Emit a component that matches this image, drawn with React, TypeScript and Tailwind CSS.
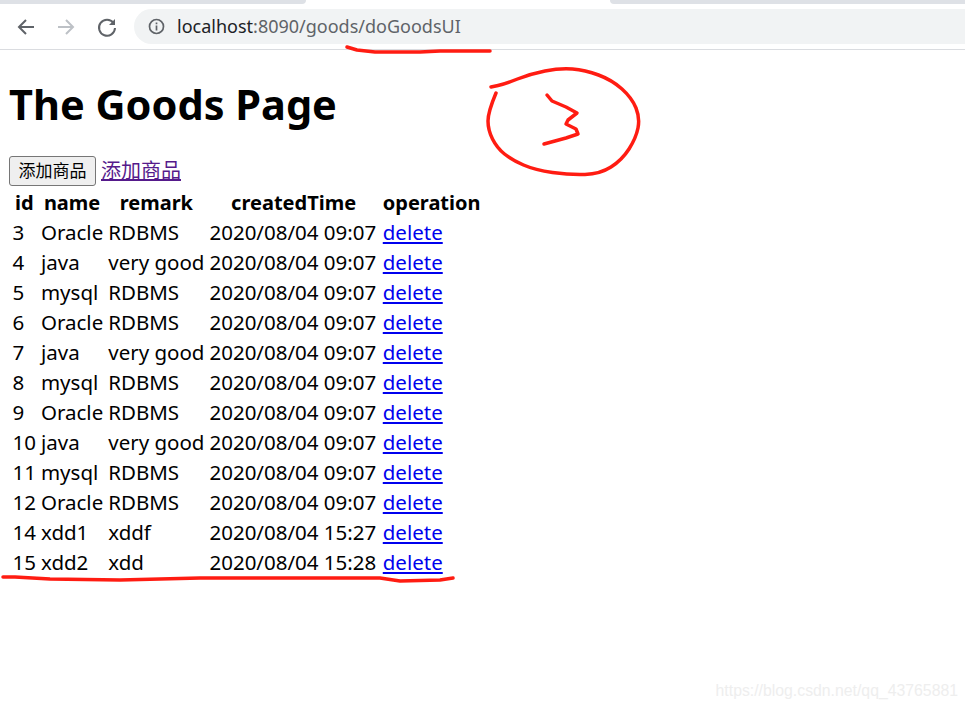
const FONT = "font-['Noto_Sans','Noto_Sans_CJK_SC',sans-serif]";

const ROWS = [
  ["3", "Oracle", "RDBMS", "2020/08/04 09:07"],
  ["4", "java", "very good", "2020/08/04 09:07"],
  ["5", "mysql", "RDBMS", "2020/08/04 09:07"],
  ["6", "Oracle", "RDBMS", "2020/08/04 09:07"],
  ["7", "java", "very good", "2020/08/04 09:07"],
  ["8", "mysql", "RDBMS", "2020/08/04 09:07"],
  ["9", "Oracle", "RDBMS", "2020/08/04 09:07"],
  ["10", "java", "very good", "2020/08/04 09:07"],
  ["11", "mysql", "RDBMS", "2020/08/04 09:07"],
  ["12", "Oracle", "RDBMS", "2020/08/04 09:07"],
  ["14", "xdd1", "xddf", "2020/08/04 15:27"],
  ["15", "xdd2", "xdd", "2020/08/04 15:28"],
];

const HEADERS = ["id", "name", "remark", "createdTime", "operation"];

// browser toolbar above the page
const Toolbar = () => (
  <div className="h-[50px] bg-white border-b border-[#dadce0]">
    <div className="flex h-[4px]">
      <div className="w-[306px] bg-[#dee1e6] rounded-br-lg" />
      <div className="w-[304px]" />
      <div className="flex-1 bg-[#dee1e6] rounded-bl-lg" />
    </div>
    <div className="flex items-center h-[45px] pl-[15px]">
      <svg width="22" height="22" viewBox="0 0 22 22" fill="none" stroke="#5f6368" strokeWidth="2">
        <path d="M19 11H4M11 4l-7 7 7 7" />
      </svg>
      <svg className="ml-[18px]" width="22" height="22" viewBox="0 0 22 22" fill="none" stroke="#bdc1c6" strokeWidth="2">
        <path d="M3 11h15M11 4l7 7-7 7" />
      </svg>
      <svg className="ml-[19px]" width="22" height="22" viewBox="0 0 22 22" fill="none" stroke="#5f6368" strokeWidth="2">
        <path d="M17.5 7A8 8 0 1 0 19 12" />
        <path d="M19 3v6h-6" fill="#5f6368" stroke="none" />
      </svg>
      <div className="flex items-center flex-1 h-[35px] ml-[16px] pl-[14px] bg-[#f1f3f4] rounded-l-[18px]">
        <svg width="17" height="17" viewBox="0 0 17 17" fill="none" stroke="#5f6368" strokeWidth="1.7">
          <circle cx="8.5" cy="8.5" r="7" />
          <path d="M8.5 7.5v5M8.5 4.5v1.7" />
        </svg>
        <span className={`ml-[12px] text-[18px] text-[#5f6368] ${FONT}`}>
          <span className="text-[#202124]">localhost</span>:8090/goods/doGoodsUI
        </span>
      </div>
    </div>
  </div>
);

// hand drawn line through the points, rounded with midpoints
const smooth = (pts: number[][]) => {
  let d = `M${pts[0][0]} ${pts[0][1]}`;
  for (let i = 1; i < pts.length - 1; i++) {
    const mx = (pts[i][0] + pts[i + 1][0]) / 2;
    const my = (pts[i][1] + pts[i + 1][1]) / 2;
    d += `Q${pts[i][0]} ${pts[i][1]} ${mx} ${my}`;
  }
  const last = pts[pts.length - 1];
  return d + `L${last[0]} ${last[1]}`;
};

// red pen marks drawn over the screenshot
const Scribbles = () => (
  <svg className="absolute inset-0 pointer-events-none" width="965" height="708" fill="none" stroke="#ff1c12" strokeWidth="3.5" strokeLinecap="round" strokeLinejoin="round">
    <path d="M347 47L357 50L375 52L420 52L440 51L490 51" />
    <path d={smooth([[496, 93], [488, 112], [488, 130], [497, 148], [512, 160], [535, 170], [570, 175], [600, 174], [622, 160], [636, 138], [640, 118], [632, 98], [612, 80], [585, 70], [560, 68], [530, 74], [505, 84], [491, 87]])} />
    <path d="M547 95L552 101L566 107L577 113L568 120L566 124L576 129L578 134L566 138L544 144" />
    <path d="M3 577L15 577L50 579L120 580L200 578L380 578L400 581L440 580L453 578" />
  </svg>
);

export default function App() {
  return (
    <div className={`relative w-[965px] h-[708px] overflow-hidden bg-white text-black ${FONT}`}>
      <Toolbar />
      <div className="pl-[9px]">
        <h1 className="text-[41.5px] leading-[54px] font-bold mt-[27px]">The Goods Page</h1>
        <div className="flex items-center mt-[25px] h-[30px]">
          <button className="h-[30px] w-[87px] border border-[#767676] rounded-[3px] bg-[#efefef] text-[17px]">添加商品</button>
          <a href="#" className="ml-[5px] text-[20px] text-[#551a8b] underline">添加商品</a>
        </div>
        <table className="border-separate border-spacing-[2px] text-[20.5px] leading-[25px]">
          <thead>
            <tr>
              {HEADERS.map((h) => (
                <th key={h} className="p-[1.5px] text-[20px] font-bold text-center">{h}</th>
              ))}
            </tr>
          </thead>
          <tbody>
            {ROWS.map((row) => (
              <tr key={row[0]}>
                {row.map((cell, i) => (
                  <td key={i} className={i === 3 ? "p-[1.5px] pr-[3px] whitespace-nowrap" : "p-[1.5px] whitespace-nowrap"}>{cell}</td>
                ))}
                <td className="p-[1.5px]">
                  <a href="#" className="text-[#0000ee] underline">delete</a>
                </td>
              </tr>
            ))}
          </tbody>
        </table>
      </div>
      <Scribbles />
      <span className="absolute right-[7px] top-[679px] text-[15.8px] text-[#eeeeee] font-['Liberation_Sans',sans-serif]">https://blog.csdn.net/qq_43765881</span>
    </div>
  );
}
